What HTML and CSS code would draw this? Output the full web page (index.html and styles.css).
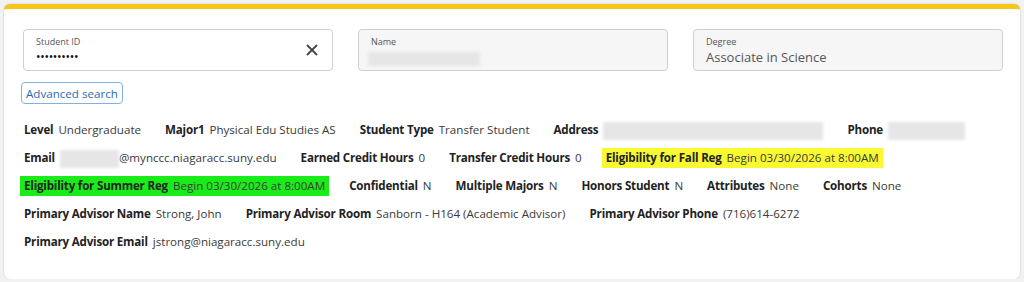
FILE: index.html
```html
<!doctype html>
<html lang="en">
<head>
	<meta charset="UTF-8">
	<title>Student</title>
	<link rel="stylesheet" href="styles.css">
</head>
<body>
	<div class="card">
		<div class="fields">
			<div class="field">
				<div class="field-label">Student ID</div>
				<div class="field-value dots">&#8226;&#8226;&#8226;&#8226;&#8226;&#8226;&#8226;&#8226;&#8226;&#8226;</div>
				<svg class="clear" width="14" height="14" viewBox="0 0 14 14"><path d="M2 2L12 12M12 2L2 12" stroke="#444" stroke-width="1.8" fill="none"/></svg>
			</div>
			<div class="field disabled">
				<div class="field-label">Name</div>
				<div class="field-value"><span class="blur name-blur"></span></div>
			</div>
			<div class="field disabled">
				<div class="field-label">Degree</div>
				<div class="field-value">Associate in Science</div>
			</div>
		</div>

		<button class="adv">Advanced search</button>

		<div class="info">
			<div class="row">
				<div class="item"><b>Level</b><span>Undergraduate</span></div>
				<div class="item"><b>Major1</b><span>Physical Edu Studies AS</span></div>
				<div class="item"><b>Student Type</b><span>Transfer Student</span></div>
				<div class="item"><b>Address</b><span class="blur addr-blur"></span></div>
				<div class="item"><b>Phone</b><span class="blur phone-blur"></span></div>
			</div>
			<div class="row">
				<div class="item"><b>Email</b><span class="email"><span class="blur email-blur"></span>@mynccc.niagaracc.suny.edu</span></div>
				<div class="item"><b>Earned Credit Hours</b><span>0</span></div>
				<div class="item"><b>Transfer Credit Hours</b><span>0</span></div>
				<div class="item yellow"><b>Eligibility for Fall Reg</b><span>Begin 03/30/2026 at 8:00AM</span></div>
			</div>
			<div class="row">
				<div class="item green"><b>Eligibility for Summer Reg</b><span>Begin 03/30/2026 at 8:00AM</span></div>
				<div class="item"><b>Confidential</b><span>N</span></div>
				<div class="item"><b>Multiple Majors</b><span>N</span></div>
				<div class="item"><b>Honors Student</b><span>N</span></div>
				<div class="item"><b>Attributes</b><span>None</span></div>
				<div class="item"><b>Cohorts</b><span>None</span></div>
			</div>
			<div class="row">
				<div class="item"><b>Primary Advisor Name</b><span>Strong, John</span></div>
				<div class="item"><b>Primary Advisor Room</b><span>Sanborn - H164 (Academic Advisor)</span></div>
				<div class="item"><b>Primary Advisor Phone</b><span>(716)614-6272</span></div>
			</div>
			<div class="row">
				<div class="item"><b>Primary Advisor Email</b><span>jstrong@niagaracc.suny.edu</span></div>
			</div>
		</div>
	</div>
</body>
</html>
```

FILE: styles.css
```css
body{
	margin: 0;
	padding: 4px 4px 0 4px;
	background: #f2f2f2;
	font-family: "Open Sans", "Noto Sans", sans-serif;
	color: #222;
}
.card{
	background: #fff;
	border-top: 5px solid #f5c518;
	border-radius: 6px;
	padding: 20px 17px 20px 19px;
	height: 275px;
	box-sizing: border-box;
	box-shadow: 0 0 2px rgba(0,0,0,0.2);
}
.fields{
	display: flex;
	gap: 25px;
}
.field{
	position: relative;
	width: 310px;
	height: 42px;
	box-sizing: border-box;
	border: 1px solid #cfcfcf;
	border-radius: 4px;
	padding: 6px 12px 0 12px;
	background: #fff;
}
.field.disabled{
	background: #f6f6f6;
}
.field-label{
	font-size: 9px;
	line-height: 12px;
	color: #555;
}
.field-value{
	font-size: 13px;
	line-height: 18px;
	color: #555;
	height: 18px;
}
.field-value.dots{
	color: #111;
	font-size: 12px;
	letter-spacing: -0.3px;
}
.clear{
	position: absolute;
	right: 13px;
	top: 13px;
}
.blur{
	display: inline-block;
	background: #e6e6e8;
	filter: blur(1.5px);
	vertical-align: middle;
}
.name-blur{
	width: 112px;
	height: 14px;
	margin-left: -3px;
}
.adv{
	display: block;
	margin: 11px 0 0 -2px;
	height: 22px;
	padding: 0 4px;
	font-family: inherit;
	font-size: 11.6px;
	color: #2b6cb0;
	background: #fff;
	border: 1px solid #7fb2e0;
	border-radius: 4px;
}
.info{
	margin: 16px 0 0 -3px;
	display: flex;
	flex-direction: column;
	gap: 8px;
}
.row{
	display: flex;
	gap: 16px;
}
.item{
	font-size: 11.6px;
	line-height: 20px;
	padding: 0 4px;
	white-space: nowrap;
}
.item b{
	font-weight: 700;
	letter-spacing: -0.2px;
	margin-right: 5px;
}
.item span{
	color: #3a3a3a;
}
.yellow{
	background: #f9f932;
}
.green{
	background: #19ec19;
}
.addr-blur{
	width: 220px;
	height: 18px;
}
.phone-blur{
	width: 77px;
	height: 18px;
}
.email-blur{
	width: 59px;
	height: 18px;
}
```
